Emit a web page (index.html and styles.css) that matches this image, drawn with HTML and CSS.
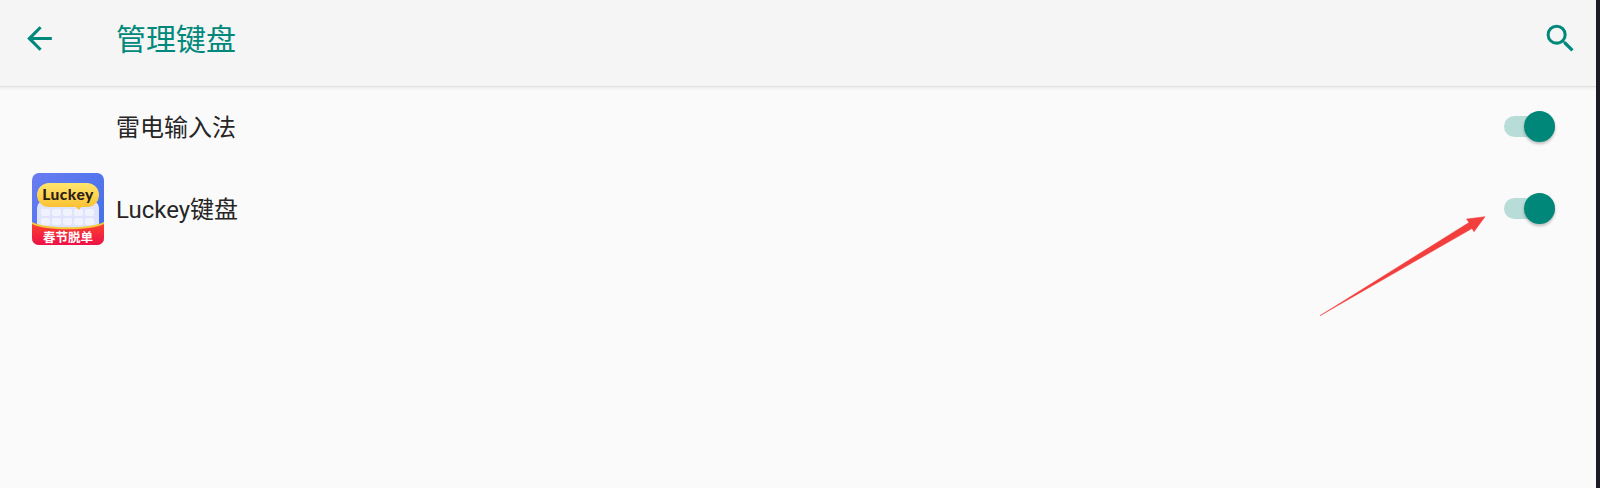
FILE: index.html
```html
<!DOCTYPE html>
<html lang="zh-CN">
<head>
    <meta charset="UTF-8">
    <title>管理键盘</title>
    <link rel="stylesheet" href="styles.css">
</head>
<body>
    <div class="screen">
        <header class="toolbar">
            <svg class="back-icon" viewBox="0 0 24 24"><path d="M20 11H7.83l5.59-5.59L12 4l-8 8 8 8 1.41-1.41L7.83 13H20z"/></svg>
            <h1>管理键盘</h1>
            <svg class="search-icon" viewBox="0 0 24 24"><path d="M15.5 14h-.79l-.28-.27A6.47 6.47 0 0 0 16 9.5 6.5 6.5 0 1 0 9.500 16c1.61 0 3.09-.59 4.23-1.57l.27.28v.79l5 4.99L20.49 19l-4.99-5zm-6 0C7.01 14 5 11.99 5 9.500S7.01 5 9.500 5 14 7.01 14 9.500 11.990 14 9.500 14z"/></svg>
        </header>

        <div class="list">
            <div class="row">
                <div class="app-icon-slot"></div>
                <span class="label">雷电输入法</span>
                <div class="switch"><span class="thumb"></span></div>
            </div>
            <div class="row">
                <div class="app-icon-slot">
                    <svg class="luckey-icon" viewBox="0 0 72 72">
                        <defs>
                            <linearGradient id="sky" x1="0" y1="0" x2="1" y2="1">
                                <stop offset="0" stop-color="#6a7cf2"/>
                                <stop offset="1" stop-color="#3d6fe6"/>
                            </linearGradient>
                            <linearGradient id="bubble" x1="0" y1="0" x2="0" y2="1">
                                <stop offset="0" stop-color="#ffe66e"/>
                                <stop offset="1" stop-color="#fbc234"/>
                            </linearGradient>
                            <linearGradient id="red" x1="0" y1="0" x2="0" y2="1">
                                <stop offset="0" stop-color="#f9412f"/>
                                <stop offset="1" stop-color="#ee1148"/>
                            </linearGradient>
                        </defs>
                        <rect width="72" height="72" rx="7" fill="url(#sky)"/>
                        <rect x="5" y="28" width="62" height="30" rx="7" fill="#dfe3fb"/>
                        <g fill="#f0f2fe">
                            <rect x="9" y="36" width="9" height="7" rx="2"/>
                            <rect x="20" y="36" width="9" height="7" rx="2"/>
                            <rect x="31" y="36" width="9" height="7" rx="2"/>
                            <rect x="42" y="36" width="9" height="7" rx="2"/>
                            <rect x="53" y="36" width="9" height="7" rx="2"/>
                            <rect x="9" y="45" width="9" height="7" rx="2"/>
                            <rect x="20" y="45" width="9" height="7" rx="2"/>
                            <rect x="31" y="45" width="9" height="7" rx="2"/>
                            <rect x="42" y="45" width="9" height="7" rx="2"/>
                            <rect x="53" y="45" width="9" height="7" rx="2"/>
                        </g>
                        <rect x="5" y="10" width="62" height="24" rx="12" fill="url(#bubble)"/>
                        <path d="M43 33h7l-3 4z" fill="#fbc234"/>
                        <path d="M0 49c12 7 60 7 72 0v16a7 7 0 0 1-7 7H7a7 7 0 0 1-7-7z" fill="#f2c93c"/>
                        <path d="M0 51c12 7 60 7 72 0v14a7 7 0 0 1-7 7H7a7 7 0 0 1-7-7z" fill="url(#red)"/>
                        <text class="luckey-word" x="36" y="27" text-anchor="middle">Luckey</text>
                        <text class="luckey-promo" x="36" y="68.500" text-anchor="middle">春节脱单</text>
                    </svg>
                </div>
                <span class="label">Luckey键盘</span>
                <div class="switch"><span class="thumb"></span></div>
            </div>
        </div>

        <!-- annotation drawn over the screenshot -->
        <svg class="arrow" viewBox="0 0 1596 488"><path d="M1320 315.700L1469 222.500 1466.500 219 1485 216.700 1474 231.700 1472 228.500z"/></svg>
    </div>
</body>
</html>
```

FILE: styles.css
```css
* {
    box-sizing: border-box;
    margin: 0;
    padding: 0;
}

body {
    background: #1b1b25;
    font-family: "Roboto", "Noto Sans CJK SC", sans-serif;
}

.screen {
    position: relative;
    width: 1596px;
    height: 488px;
    overflow: hidden;
    background: #fafafa;
}

.toolbar {
    display: flex;
    align-items: center;
    height: 87px;
    padding-left: 21px;
    padding-right: 17px;
    padding-bottom: 10px;
    background: #f5f5f5;
    border-bottom: 1px solid #e0e0e0;
    box-shadow: 0 1px 3px rgba(0,0,0,0.08);
}

.back-icon {
    width: 37px;
    height: 37px;
    fill: #00897b;
}

.toolbar h1 {
    flex: 1;
    margin-left: 58px;
    margin-bottom: 2px;
    font-size: 30px;
    font-weight: 400;
    color: #00897b;
}

.search-icon {
    width: 37px;
    height: 37px;
    fill: #00897b;
}

.list {
    margin-top: -1px;
}

.row {
    display: flex;
    align-items: center;
    height: 82px;
    padding-left: 32px;
    padding-right: 41px;
}

.app-icon-slot {
    width: 72px;
    height: 72px;
    flex-shrink: 0;
}

.label {
    flex: 1;
    margin-left: 12px;
    margin-bottom: 4px;
    font-size: 24px;
    color: #262626;
}

.switch {
    position: relative;
    width: 51px;
    height: 21px;
    margin-top: -1px;
    border-radius: 11px;
    background: #b8dcd8;
}

.thumb {
    position: absolute;
    right: 0;
    top: -5px;
    width: 31px;
    height: 31px;
    border-radius: 50%;
    background: #00877a;
    box-shadow: 0 2px 3px rgba(0,0,0,0.25);
}

.luckey-icon {
    display: block;
    width: 72px;
    height: 72px;
}

.luckey-word {
    font-family: "Lato", sans-serif;
    font-size: 15.5px;
    font-weight: 900;
    letter-spacing: 0.5px;
    fill: #2a2018;
}

.luckey-promo {
    font-family: "Noto Sans CJK SC", sans-serif;
    font-size: 12.5px;
    font-weight: 700;
    fill: #fff;
}

.arrow {
    position: absolute;
    left: 0;
    top: 0;
    width: 1596px;
    height: 488px;
    fill: #f23e3c;
    stroke: #f23e3c;
    stroke-width: 0.5px;
}
```
